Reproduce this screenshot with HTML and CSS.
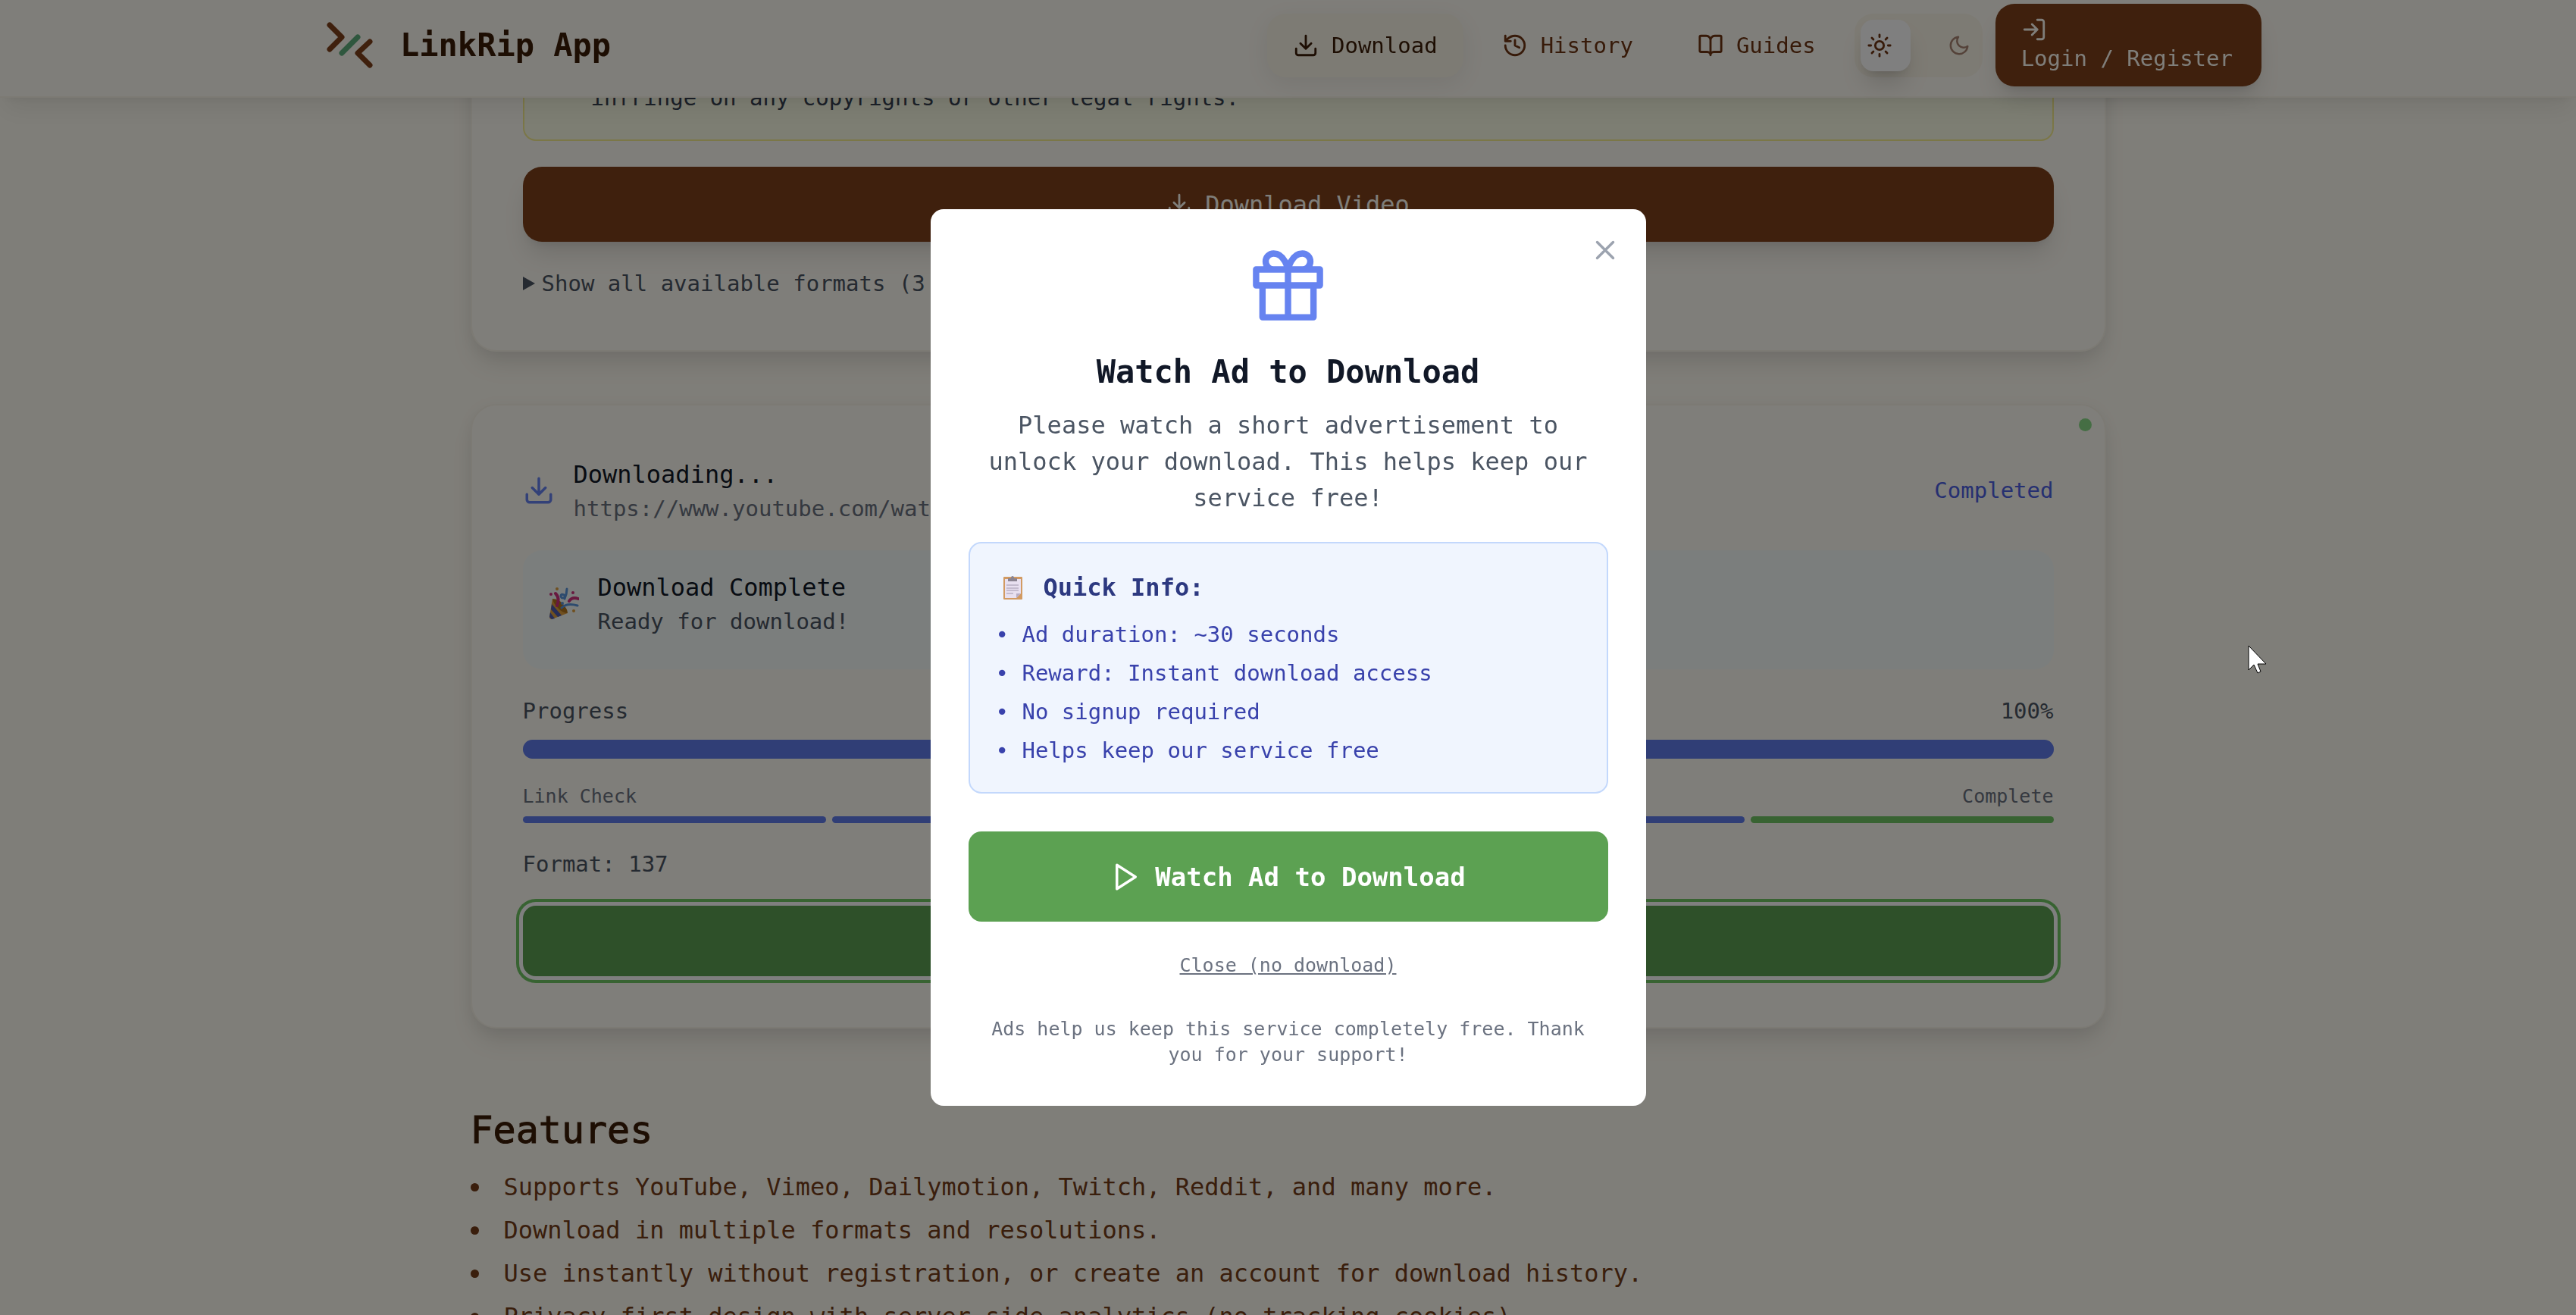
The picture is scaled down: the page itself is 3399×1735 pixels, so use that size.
FILE: index.html
```html
<!DOCTYPE html>
<html lang="en">
<head>
<meta charset="utf-8">
<title>LinkRip App</title>
<link rel="stylesheet" href="styles.css">
</head>
<body>
<header class="topbar">
  <div class="topbar-inner">
    <a class="brand" href="#">
      <svg class="brand-logo" viewBox="0 0 76 76" fill="none" stroke-width="7" stroke-linecap="round" stroke-linejoin="round">
        <path d="M11 11L27 27L11 43" stroke="#7e401a"/>
        <path d="M48 27L27 48" stroke="#5fae7d"/>
        <path d="M64 33L48 48L64 64" stroke="#7e401a"/>
      </svg>
      <span>LinkRip App</span>
    </a>
    <nav class="nav">
      <a class="nav-link active" href="#">
        <svg class="icon" viewBox="0 0 24 24"><path d="M21 15v4a2 2 0 0 1-2 2H5a2 2 0 0 1-2-2v-4M7 10l5 5 5-5M12 15V3"/></svg>
        <span>Download</span>
      </a>
      <a class="nav-link" href="#">
        <svg class="icon" viewBox="0 0 24 24"><path d="M3 12a9 9 0 1 0 9-9 9.750 9.750 0 0 0-6.740 2.740L3 8M3 3v5h5M12 7v5l4 2"/></svg>
        <span>History</span>
      </a>
      <a class="nav-link" href="#">
        <svg class="icon" viewBox="0 0 24 24"><path d="M12 7v14M3 18a1 1 0 0 1-1-1V4a1 1 0 0 1 1-1h5a4 4 0 0 1 4 4 4 4 0 0 1 4-4h5a1 1 0 0 1 1 1v13a1 1 0 0 1-1 1h-6a3 3 0 0 0-3 3 3 3 0 0 0-3-3z"/></svg>
        <span>Guides</span>
      </a>
      <div class="theme-toggle">
        <button class="theme-btn selected" type="button" aria-label="Light theme">
          <svg class="icon" viewBox="0 0 24 24"><circle cx="12" cy="12" r="4"/><path d="M12 2v2M12 20v2M4.900 4.900l1.400 1.400M17.700 17.700l1.400 1.400M2 12h2M20 12h2M6.300 17.700l-1.400 1.400M19.100 4.900l-1.400 1.400"/></svg>
        </button>
        <button class="theme-btn" type="button" aria-label="Dark theme">
          <svg class="icon icon-sm" viewBox="0 0 24 24"><path d="M21 12.800A9 9 0 1 1 11.200 3 7 7 0 0 0 21 12.800z"/></svg>
        </button>
      </div>
      <button class="login" type="button">
        <svg class="icon" viewBox="0 0 24 24"><path d="M15 3h4a2 2 0 0 1 2 2v14a2 2 0 0 1-2 2h-4M10 17l5-5-5-5M15 12H3"/></svg>
        <span>Login / Register</span>
      </button>
    </nav>
  </div>
</header>

<main class="page">
  <section class="card card-form">
    <div class="notice"><p>infringe on any copyrights or other legal rights.</p></div>
    <button class="btn-primary" type="button">
      <svg class="icon" viewBox="0 0 24 24"><path d="M21 15v4a2 2 0 0 1-2 2H5a2 2 0 0 1-2-2v-4M7 10l5 5 5-5M12 15V3"/></svg>
      <span>Download Video</span>
    </button>
    <details class="formats"><summary>Show all available formats (3 total)</summary></details>
  </section>

  <section class="card card-status">
    <span class="status-dot"></span>
    <div class="job">
      <svg class="icon icon-lg job-icon" viewBox="0 0 24 24"><path d="M21 15v4a2 2 0 0 1-2 2H5a2 2 0 0 1-2-2v-4M7 10l5 5 5-5M12 15V3"/></svg>
      <div class="job-text">
        <h3>Downloading...</h3>
        <p>https://www.youtube.com/watch</p>
      </div>
      <span class="job-state">Completed</span>
    </div>
    <div class="ready">
      <svg class="party" viewBox="0 0 40 42">
        <path d="M5 15L25 34L4 42Q1 42 1 39z" fill="#e0a040"/>
        <path d="M5 15Q13 15 19 22Q25 29 25 34Q18 34 12 27Q6 21 5 15z" fill="#b3751c"/>
        <path d="M4 22L17 37L12 39L3 29zM2 33L8 41L4 42L1 39z" fill="#4b5ab0"/>
        <path d="M9 8Q15 14 11 24M27 18Q31 12 39 15" fill="none" stroke="#d0307f" stroke-width="4" stroke-linecap="round"/>
        <path d="M17 27Q24 20 38 24M24 2Q24 8 21 15M22 11Q16 7 16 12Q18 16 22 12" fill="none" stroke="#5b96dc" stroke-width="3" stroke-linecap="round"/>
        <circle cx="11" cy="2" r="2" fill="#e0a040"/><circle cx="33" cy="31" r="2" fill="#e0a040"/>
        <circle cx="3" cy="9" r="2" fill="#d0307f"/><circle cx="32" cy="7" r="2" fill="#d0307f"/><circle cx="18" cy="21" r="2" fill="#5b96dc"/>
      </svg>
      <div class="job-text">
        <h3>Download Complete</h3>
        <p>Ready for download!</p>
      </div>
    </div>
    <div class="progress-head"><span>Progress</span><span>100%</span></div>
    <div class="progress"><div class="progress-fill" style="width:100%"></div></div>
    <div class="steps-head"><span>Link Check</span><span>Complete</span></div>
    <div class="steps">
      <span></span><span></span><span></span><span></span><span class="done"></span>
    </div>
    <p class="format">Format: 137</p>
    <button class="btn-save" type="button" aria-label="Download file"></button>
  </section>

  <section class="features">
    <h2>Features</h2>
    <ul>
      <li>Supports YouTube, Vimeo, Dailymotion, Twitch, Reddit, and many more.</li>
      <li>Download in multiple formats and resolutions.</li>
      <li>Use instantly without registration, or create an account for download history.</li>
      <li>Privacy-first design with server-side analytics (no tracking cookies).</li>
    </ul>
  </section>
</main>

<div class="overlay">
  <div class="modal" role="dialog" aria-modal="true" aria-labelledby="modal-title">
    <button class="modal-x" type="button" aria-label="Close">
      <svg class="icon icon-lg" viewBox="0 0 24 24"><path d="M6 6l12 12M18 6L6 18"/></svg>
    </button>
    <svg class="icon gift" viewBox="0 0 24 24"><path d="M20 12v10H4V12M2 7h20v5H2zM12 22V7M12 7H7.500a2.500 2.500 0 0 1 0-5C11 2 12 7 12 7zM12 7h4.500a2.500 2.500 0 0 0 0-5C13 2 12 7 12 7z"/></svg>
    <h2 id="modal-title">Watch Ad to Download</h2>
    <p class="lead">Please watch a short advertisement to unlock your download. This helps keep our service free!</p>
    <div class="info">
      <h3>
        <svg class="clip" viewBox="0 0 44 34">
          <rect x="10" y="3" width="25" height="30" rx="1" fill="#d29a62"/>
          <path d="M12 6h21v19l-6 6H12z" fill="#e8e0f0"/>
          <path d="M33 25l-6 6v-6z" fill="#b8aec6"/>
          <path d="M14 14h16M14 18h16M14 21h16M14 25h9" stroke="#a198ae" stroke-width="1"/>
          <path d="M16 9V5h4q0-3 2-3t2 3h4v4z" fill="#8a8390"/>
        </svg>
        <span>Quick Info:</span>
      </h3>
      <ul>
        <li>• Ad duration: ~30 seconds</li>
        <li>• Reward: Instant download access</li>
        <li>• No signup required</li>
        <li>• Helps keep our service free</li>
      </ul>
    </div>
    <button class="btn-watch" type="button">
      <svg class="icon icon-lg" viewBox="0 0 24 24"><path d="M5 3l14 9-14 9z"/></svg>
      <span>Watch Ad to Download</span>
    </button>
    <button class="btn-close" type="button">Close (no download)</button>
    <p class="fine">Ads help us keep this service completely free. Thank you for your support!</p>
  </div>
</div>

<svg class="cursor" viewBox="0 0 25 38"><path d="M1 1V33L8 26L13 37L17 35L13 25H24z" fill="#fff" stroke="#000" stroke-width="1"/></svg>
</body>
</html>
```
FILE: styles.css
```css
* { box-sizing: border-box; margin: 0; padding: 0; }

body {
  height: 100vh;
  overflow: hidden;
  background: #fffcf2;
  font-family: "DejaVu Sans Mono", monospace;
  font-size: 29px;
  line-height: 42px;
  color: #374151;
}

button { border: 0; background: none; font: inherit; color: inherit; cursor: pointer; }
a { color: inherit; text-decoration: none; }
ul { list-style: none; }
h2, h3 { font-weight: 400; }

.icon {
  width: 34px;
  height: 34px;
  flex: none;
  fill: none;
  stroke: currentColor;
  stroke-width: 2;
  stroke-linecap: round;
  stroke-linejoin: round;
}
.icon-sm { width: 30px; height: 30px; }
.icon-lg { width: 42px; height: 42px; }

/* Top bar */
.topbar {
  position: fixed;
  top: 0;
  left: 0;
  right: 0;
  z-index: 10;
  padding: 5px 0 13px;
  background: #fffcf4;
  border-bottom: 2px solid #f9f5e9;
  box-shadow: 0 21px 32px -6px rgba(0, 0, 0, .07), 0 8px 13px -8px rgba(0, 0, 0, .07);
}
.topbar-inner {
  display: flex;
  align-items: center;
  justify-content: space-between;
  max-width: 2569px;
  margin: 0 auto;
  padding-left: 9px;
}
.brand {
  display: flex;
  align-items: center;
  gap: 28px;
  font-size: 42px;
  font-weight: 700;
  color: #3b1c06;
}
.brand-logo { width: 76px; height: 76px; }
.nav { display: flex; align-items: center; gap: 17px; color: #6e3512; }
.nav-link {
  display: flex;
  align-items: center;
  gap: 17px;
  padding: 21px 34px;
  border-radius: 25px;
}
.nav-link.active {
  background: #fbf6e8;
  color: #3b1c06;
  box-shadow: 0 8px 32px rgba(0, 0, 0, .07);
}
.theme-toggle {
  display: flex;
  justify-content: space-between;
  width: 169px;
  padding: 8px;
  border-radius: 25px;
  background: #fbf6e8;
}
.theme-btn {
  display: flex;
  align-items: center;
  height: 68px;
  padding: 0 8px;
  border-radius: 17px;
  color: #a98573;
}
.theme-btn.selected {
  width: 66px;
  background: #fff;
  color: #6e3512;
  box-shadow: 0 21px 32px -6px rgba(0, 0, 0, .15), 0 8px 13px -8px rgba(0, 0, 0, .15);
}
.login {
  display: flex;
  flex-direction: column;
  align-items: flex-start;
  padding: 17px 38px 16px 34px;
  border-radius: 25px;
  background: #7e401a;
  color: #fffcf4;
  box-shadow: 0 21px 32px -6px rgba(0, 0, 0, .12), 0 8px 13px -8px rgba(0, 0, 0, .12);
}

/* Page column */
.page {
  max-width: 2158px;
  margin: 0 auto;
}
.card {
  position: relative;
  padding: 67px;
  border: 2px solid #f9f5e9;
  border-radius: 34px;
  background: #fffcf4;
  box-shadow: 0 21px 32px -6px rgba(0, 0, 0, .1), 0 4px 21px rgba(0, 0, 0, .05);
}
.card-form {
  padding-top: 0;
  border-top: 0;
  border-radius: 0 0 34px 34px;
}
.notice {
  padding: 108px 88px 34px;
  border: 2px solid #f6ee8e;
  border-top: 0;
  border-radius: 0 0 17px 17px;
  background: #fbfce6;
}
.btn-primary {
  display: flex;
  align-items: center;
  justify-content: center;
  gap: 17px;
  width: 100%;
  height: 99px;
  margin: 34px 0;
  border-radius: 25px;
  background: #7e401a;
  color: #fffcf4;
  font-size: 32px;
  box-shadow: 0 21px 32px -6px rgba(0, 0, 0, .12), 0 8px 13px -8px rgba(0, 0, 0, .12);
}
.formats { color: #4b5563; }
.formats summary { display: flex; align-items: center; gap: 9px; cursor: pointer; }
.formats summary::before {
  content: "";
  border: solid transparent;
  border-width: 9px 0 9px 16px;
  border-left-color: currentColor;
}

/* Download status */
.card-status { margin-top: 69px; }
.status-dot {
  position: absolute;
  top: 17px;
  right: 17px;
  width: 17px;
  height: 17px;
  border-radius: 50%;
  background: #8bdc89;
}
.job { display: flex; align-items: center; gap: 25px; }
.job-icon { color: #6683f0; }
.job-text { flex: 1; color: #6b7280; }
.job-text h3 {
  font-size: 32px;
  line-height: 48px;
  color: #111827;
}
.job-state { color: #4c60e2; }
.ready {
  display: flex;
  align-items: center;
  gap: 25px;
  margin: 34px 0;
  padding: 25px 34px 42px;
  border-radius: 25px;
  background: #f7fcfa;
}
.ready .job-text { color: #4b5563; }
.party { width: 40px; height: 42px; }
.progress-head, .steps-head { display: flex; justify-content: space-between; color: #4b5563; }
.progress {
  height: 25px;
  margin: 17px 0 33px;
  border-radius: 13px;
  background: #e5e7eb;
}
.progress-fill { height: 100%; border-radius: 13px; background: #607cec; }
.steps-head { font-size: 25px; line-height: 34px; color: #6b7280; }
.steps { display: grid; grid-template-columns: repeat(5, 1fr); margin: 9px 0 33px; }
.steps span { height: 9px; margin: 0 4px; border-radius: 5px; background: #607cec; }
.steps span:first-child { margin-left: 0; }
.steps span:last-child { margin-right: 0; }
.steps .done { background: #70c664; }
.format { color: #4b5563; }
.btn-save {
  display: block;
  width: 100%;
  height: 93px;
  margin-top: 34px;
  border-radius: 17px;
  background: #5ca152;
  box-shadow: 0 0 0 5px #fff, 0 0 0 9px #70c664;
}

/* Features */
.features { padding-top: 101px; color: #743c18; font-size: 32px; line-height: 48px; }
.features h2 {
  margin-bottom: 17px;
  font-size: 50px;
  line-height: 67px;
  color: #3b1c06;
  -webkit-text-stroke: 1px currentColor;
}
.features ul { display: grid; gap: 9px; }
.features li { display: flex; align-items: center; gap: 33px; }
.features li::before {
  content: "";
  width: 11px;
  height: 11px;
  border-radius: 50%;
  background: currentColor;
}

/* Ad dialog */
.overlay {
  position: fixed;
  inset: 0;
  z-index: 20;
  display: flex;
  align-items: center;
  justify-content: center;
  background: rgba(0, 0, 0, .5);
}
.modal {
  position: relative;
  display: flex;
  flex-direction: column;
  align-items: center;
  width: 944px;
  padding: 50px;
  border-radius: 17px;
  background: #fff;
  text-align: center;
}
.modal-x {
  position: absolute;
  top: 33px;
  right: 33px;
  height: 42px;
  color: #9ca3af;
}
.gift { width: 101px; height: 101px; color: #6683f0; }
.modal h2 {
  margin: 34px 0 17px;
  font-size: 42px;
  line-height: 59px;
  font-weight: 700;
  color: #111827;
}
.lead { font-size: 32px; line-height: 48px; color: #4b5563; }
.info {
  width: 100%;
  margin: 34px 0 50px;
  padding: 34px;
  border: 2px solid #c3d8fc;
  border-radius: 17px;
  background: #f0f5fe;
  text-align: left;
  color: #3942ac;
}
.info h3 {
  display: flex;
  align-items: center;
  gap: 19px;
  margin-bottom: 17px;
  font-size: 32px;
  line-height: 48px;
  font-weight: 700;
  color: #2d3980;
}
.info ul { display: grid; gap: 9px; }
.clip { width: 44px; height: 34px; }
.btn-watch {
  display: flex;
  align-items: center;
  justify-content: center;
  gap: 17px;
  width: 100%;
  height: 119px;
  border-radius: 17px;
  background: #5ca152;
  color: #fff;
  font-size: 34px;
  font-weight: 700;
}
.btn-close {
  margin: 41px 0 50px;
  font-size: 25px;
  line-height: 34px;
  color: #6b7280;
  text-decoration: underline;
}
.fine { padding: 0 17px; font-size: 25px; line-height: 34px; color: #6b7280; }

.cursor { position: fixed; top: 851px; left: 2966px; z-index: 30; width: 25px; height: 38px; }
```
